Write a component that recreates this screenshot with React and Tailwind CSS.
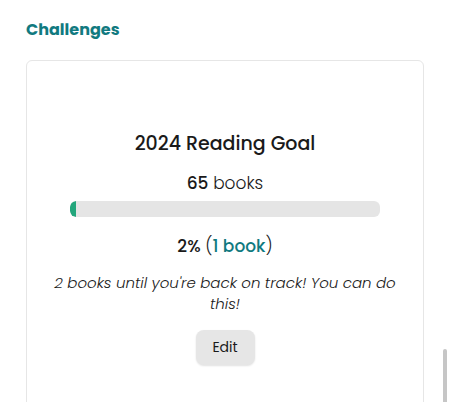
const ReadingGoal = () => {
    const goal = 65;
    const read = 1;
    const pct = Math.round((read / goal) * 100);

    return (
        <div className="mt-[18px] flex h-[400px] flex-col items-center rounded-[6px] border border-[#e6e6e6] pt-[69px]">
            <h3 className="text-[19px] font-medium leading-[28px] text-[#1a1a1a]">2024 Reading Goal</h3>
            <p className="mt-[13px] text-[17px] font-light leading-[24px] text-[#1a1a1a]">
                <span className="font-medium">{goal}</span> books
            </p>
            <div className="mt-[6px] h-[16px] w-[310px] overflow-hidden rounded-[6px] bg-[#e5e5e5]">
                <div className="h-full rounded-l-[6px] bg-[#23a67c]" style={{ width: `${pct}%` }} />
            </div>
            <p className="mt-[16px] text-[17px] font-light leading-[26px] text-[#1a1a1a]">
                <span className="font-medium">{pct}%</span> (<span className="font-medium text-[#117a80]">{read} book</span>)
            </p>
            <p className="mt-[13px] max-w-[350px] text-center text-[15px] font-light italic leading-[21px] text-[#1a1a1a]">
                2 books until you're back on track! You can do this!
            </p>
            <button className="mt-[16px] h-[35px] w-[59px] rounded-[8px] bg-[#e6e6e6] text-[14px] text-[#1a1a1a] shadow-[0_1px_2px_rgba(0,0,0,0.12)]">
                Edit
            </button>
        </div>
    );
};

export default function App() {
    return (
        <div className="relative h-[402px] w-[450px] overflow-hidden bg-white font-['Poppins','Open_Sans',sans-serif]">
            <div className="px-[26px] pt-[18px]">
                <h2 className="text-[16px] font-bold leading-[24px] text-[#117a80]">Challenges</h2>
                <ReadingGoal />
            </div>
            {/* scrollbar thumb */}
            <div className="absolute right-[3px] top-[349px] h-[60px] w-[4px] rounded-full bg-[#c6c6c6]" />
        </div>
    );
}
